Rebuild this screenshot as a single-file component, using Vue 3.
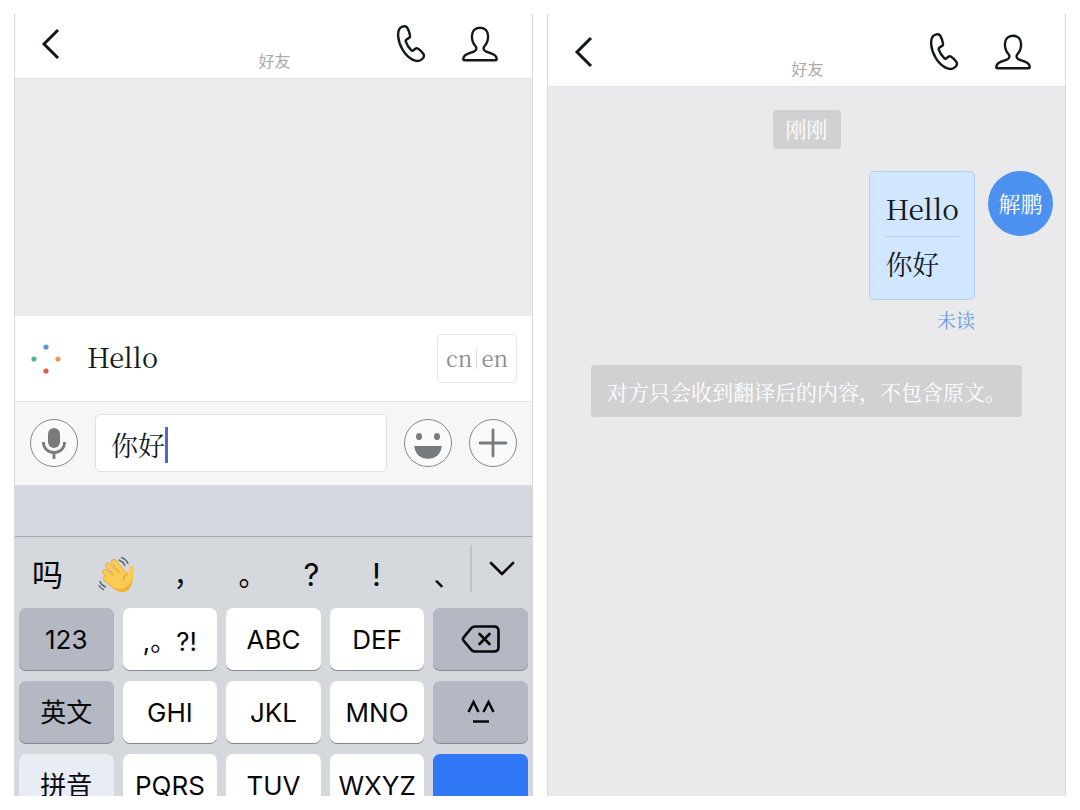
<script setup>
import { ref } from 'vue'

const draft = ref('你好')
const candidates = [
  { text: '吗' },
  { wave: true, text: '挥手' },
  { text: '，', mark: true },
  { text: '。', mark: true },
  { text: '?', latin: true },
  { text: '!', latin: true },
  { text: '、', mark: true },
]
const keys = [
  { text: '123', tone: 'dark' },
  { text: ',。?!', tone: 'light' },
  { text: 'ABC', tone: 'light' },
  { text: 'DEF', tone: 'light' },
  { icon: 'delete', tone: 'dark', label: '删除' },
  { text: '英文', tone: 'dark', cjk: true },
  { text: 'GHI', tone: 'light' },
  { text: 'JKL', tone: 'light' },
  { text: 'MNO', tone: 'light' },
  { icon: 'face', tone: 'dark', label: '颜文字' },
  { text: '拼音', tone: 'pale', cjk: true },
  { text: 'PQRS', tone: 'light' },
  { text: 'TUV', tone: 'light' },
  { text: 'WXYZ', tone: 'light' },
  { tone: 'blue', label: '确认' },
]
const screens = ['compose', 'thread']
</script>

<template>
  <main class="page">
    <section v-for="screen in screens" :key="screen" class="phone" :class="screen">
      <header class="bar">
        <button class="plain back" aria-label="返回">
          <svg width="20" height="32" viewBox="0 0 20 32"><path d="M17 2 3 16l14 14" fill="none" stroke="#15171a" stroke-width="3" /></svg>
        </button>
        <h1 class="title">好友</h1>
        <div class="actions">
          <button class="plain" aria-label="通话">
            <svg width="30" height="40" viewBox="0 0 30 40"><path d="M6.500 2.600C3.300 3.600 1.800 7.500 2.200 12.500c.8 9.500 6.800 19.300 14.300 23.100 3.300 1.600 7.300 1.800 9.700-.6 2.100-2 2.400-3.200 1.200-5-1.400-2.200-3.200-4-5.200-5.300-1.200-.7-2-.6-2.900.1l-2.200 1.700c-.7.5-1.300.3-1.900-.3-2.700-2.700-4.400-5.300-5.400-8.500-.3-1 0-1.800.8-2.300l2.200-1.300c1-.6 1.500-1.400 1.200-2.700-.5-2.700-1.200-4.900-2.500-7.300-.9-1.600-2.900-2.100-5-1.500Z" fill="none" stroke="#15171a" stroke-width="2.400" stroke-linejoin="round" /></svg>
          </button>
          <button class="plain" aria-label="个人资料">
            <svg width="36" height="36" viewBox="0 0 36 36"><path d="M18 1.700c-5 0-8.100 3.300-8.100 8.600 0 4.200 1.200 7.300 3.500 9.700 1.700 1.800 1.200 4.200-.8 5.200-2.400 1.200-5.700 1.900-8.200 3.300-2.200 1.200-3.100 2.500-3.100 4.500 0 .9.400 1.300 1.400 1.300h30.600c1 0 1.400-.4 1.400-1.300 0-2-.9-3.300-3.100-4.500-2.500-1.400-5.800-2.100-8.200-3.300-2-1-2.500-3.400-.8-5.200 2.300-2.400 3.500-5.500 3.500-9.700 0-5.300-3.100-8.600-8.100-8.600Z" fill="none" stroke="#15171a" stroke-width="2.400" stroke-linejoin="round" /></svg>
          </button>
        </div>
      </header>

      <template v-if="screen === 'compose'">
        <div class="history"></div>
        <div class="translation">
          <svg class="dots" width="30" height="30" viewBox="0 0 30 30" aria-hidden="true">
            <circle cx="15" cy="3" r="2.600" fill="#5b92d8" /><circle cx="27" cy="15" r="2.600" fill="#e59b52" />
            <circle cx="15" cy="27" r="2.600" fill="#d55f50" /><circle cx="3" cy="15" r="2.600" fill="#54b684" />
          </svg>
          <span class="translated">Hello</span>
          <button class="lang"><span>cn</span><i></i><span>en</span></button>
        </div>
        <form class="composer" @submit.prevent>
          <button type="button" class="round" aria-label="语音">
            <svg width="30" height="34" viewBox="0 0 30 34"><rect x="9" y="2" width="12" height="20" rx="6" fill="#777b7d" /><path d="M4.500 16v1a10.500 9.500 0 0 0 21 0v-1M15 26v7" fill="none" stroke="#777b7d" stroke-width="2.800" /></svg>
          </button>
          <div class="field">
            <input v-model="draft" type="text" aria-label="消息内容" />
            <span class="caret"></span>
          </div>
          <button type="button" class="round" aria-label="表情">
            <svg width="30" height="34" viewBox="0 0 30 34"><ellipse cx="6" cy="10.500" rx="3" ry="3.500" fill="#777b7d" /><ellipse cx="24" cy="10.500" rx="3" ry="3.500" fill="#777b7d" /><path d="M1.300 20h27.400c-.5 8-6 12.800-13.700 12.800S1.800 28 1.300 20Z" fill="#777b7d" /></svg>
          </button>
          <button type="button" class="round" aria-label="更多">
            <svg width="30" height="30" viewBox="0 0 30 30"><path d="M15 2v26M2 15h26" stroke="#777b7d" stroke-width="2.800" stroke-linecap="round" /></svg>
          </button>
        </form>
        <div class="accessory"></div>
        <div class="keyboard">
          <div class="suggestions">
            <div class="candidates">
              <button v-for="c in candidates" :key="c.text" class="plain candidate" :class="{ mark: c.mark, latin: c.latin, wave: c.wave }" :aria-label="c.text">
                <svg v-if="c.wave" width="38" height="38" viewBox="0 0 38 38">
                  <g fill="none" stroke-linecap="round">
                    <g stroke="#dfa02f" stroke-width="5.600">
                      <path d="m16 6 11 13M10 9.500 23 22M7 16l13 11M8 22.500 18 31" />
                    </g>
                    <g stroke="#fccb52" stroke-width="4.400">
                      <path d="m16 6 11 13M10 9.500 23 22M7 16l13 11M8 22.500 18 31" />
                    </g>
                    <path d="M21 4q4 1.500 6 5.500M23.500 1.500Q28 3 30 7.500M2 25.500q1.500 4 5.500 5.500M1 29.500q1.500 3 4.500 4" stroke="#5d656e" stroke-width="1.400" />
                  </g>
                  <path d="m17 17 9-2 4 3c.6-2 .8-4.500 1.700-6.700 1-2.300 4.400-1.800 4.300.9-.1 3.300-.5 6-1 9.800C34.300 30 30.500 36 24.500 36c-4.500 0-8-2.500-12-7Z" fill="#fccb52" />
                  <path d="M30 18c-2.800 1-4.700 3.500-4.500 7" fill="none" stroke="#dda03a" stroke-width="1.200" />
                  <path d="M35.200 21C34.300 30 30.500 36 24.500 36c-3.500 0-6.500-1.500-9.500-4.500C23.500 35 32 32 35.200 21Z" fill="#f0b03a" />
                </svg>
                <template v-else>{{ c.text }}</template>
              </button>
            </div>
            <button class="plain expand" aria-label="展开候选">
              <svg width="28" height="18" viewBox="0 0 28 18"><path d="m3 3 11 11L25 3" fill="none" stroke="#080808" stroke-width="2.600" stroke-linecap="round" stroke-linejoin="round" /></svg>
            </button>
          </div>
          <div class="keys">
            <button v-for="(k, i) in keys" :key="i" class="key" :class="[k.tone, { cjk: k.cjk }]" :aria-label="k.label">
              <svg v-if="k.icon === 'delete'" width="40" height="30" viewBox="0 0 40 30"><path d="M14 2.500h19q4.500 0 4.500 4.500v16q0 4.500-4.500 4.500H14q-2 0-3.500-1.500L3 17.200q-2-2.200 0-4.400L10.500 4Q12 2.500 14 2.500Z" fill="none" stroke="#080808" stroke-width="2.600" /><path d="m18.500 10 10 10m0-10-10 10" stroke="#080808" stroke-width="2.600" stroke-linecap="round" /></svg>
              <svg v-else-if="k.icon === 'face'" width="30" height="26" viewBox="0 0 30 26"><path d="m2.500 13 5-10 5 10M17.500 13l5-10 5 10M7 22.500h16" fill="none" stroke="#080808" stroke-width="2.500" /></svg>
              <template v-else>{{ k.text }}</template>
            </button>
          </div>
        </div>
      </template>

      <div v-else class="conversation">
        <time class="stamp">刚刚</time>
        <article class="message">
          <div class="message-body">
            <div class="bubble">
              <p>Hello</p>
              <p class="original">你好</p>
            </div>
            <span class="status">未读</span>
          </div>
          <span class="avatar">解鹏</span>
        </article>
        <p class="notice">对方只会收到翻译后的内容，不包含原文。</p>
      </div>
    </section>
  </main>
</template>

<style>
body {
  margin: 0;
  background: #fff;
}
</style>

<style scoped>
* {
  box-sizing: border-box;
}
.page {
  display: grid;
  grid-template-columns: 1fr 1fr;
  gap: 14px;
  height: 100vh;
  padding: 14px;
  font-family: "Noto Serif CJK SC", "Liberation Serif", "Noto Sans CJK SC", serif;
  color: #15191d;
}
.phone {
  display: flex;
  flex-direction: column;
  min-width: 0;
  overflow: hidden;
  border: solid #d8d9dc;
  border-width: 0 1px;
  background: #ebebeb;
}
.thread {
  background: #eaeaec;
}
button {
  font: inherit;
  color: inherit;
  cursor: pointer;
}
svg {
  display: block;
  flex: none;
}
.plain {
  display: flex;
  padding: 0;
  border: 0;
  background: none;
}
.bar {
  display: grid;
  grid-template-columns: 1fr auto 1fr;
  align-items: center;
  flex: none;
  height: 65px;
  padding: 0 34px 4px 26px;
  border-bottom: 1px solid #e2e2e2;
  background: #fff;
}
.thread .bar {
  height: 73px;
  padding-top: 8px;
}
.title {
  align-self: end;
  margin: 0;
  padding: 0 0 2px 10px;
  font: 400 16px/24px "Noto Sans CJK SC", sans-serif;
  color: #aaa;
}
.actions {
  display: flex;
  justify-content: flex-end;
  align-items: center;
  gap: 36px;
}
.history {
  flex: none;
  height: 237px;
}
.translation {
  display: flex;
  align-items: center;
  flex: none;
  height: 85px;
  padding: 0 15px 0 16px;
  background: #fff;
}
.translated {
  margin-left: 26px;
  padding-bottom: 3px;
  font-size: 27px;
  line-height: 40px;
}
.lang {
  display: flex;
  align-items: center;
  justify-content: center;
  gap: 4px;
  width: 80px;
  height: 49px;
  margin-left: auto;
  padding: 0;
  border: 1px solid #e6e6e6;
  border-radius: 5px;
  background: #fff;
  font-size: 22px;
  line-height: 32px;
  color: #8b8d8f;
}
.lang span {
  padding-bottom: 2px;
}
.lang i {
  width: 1px;
  height: 20px;
  background: #ddd;
}
.composer {
  display: flex;
  align-items: center;
  flex: none;
  gap: 17px;
  height: 84px;
  padding: 0 15px 2px;
  border-top: 1px solid #e2e3e4;
  background: #f6f6f7;
}
.round {
  display: flex;
  align-items: center;
  justify-content: center;
  flex: none;
  width: 48px;
  height: 48px;
  padding: 0;
  border: 1px solid #858889;
  border-radius: 50%;
  background: #fafafa;
}
.field {
  position: relative;
  flex: 1;
  min-width: 0;
}
.field input {
  display: block;
  width: 100%;
  height: 58px;
  padding: 3px 15px 0;
  border: 1px solid #e0e1e2;
  border-radius: 5px;
  outline: 0;
  background: #fff;
  font: inherit;
  font-size: 27px;
  color: inherit;
}
.caret {
  position: absolute;
  top: 13px;
  left: 70px;
  width: 3px;
  height: 36px;
  background: #5367c8;
}
.accessory {
  flex: none;
  height: 51px;
  background: #d5d8de;
}
.keyboard {
  flex: none;
  border-top: 1px solid #a5a9ad;
  background: #d5d9de;
  font-family: Inter, "Noto Sans CJK SC", sans-serif;
  color: #080808;
}
.suggestions {
  display: flex;
  height: 71px;
}
.candidates {
  display: grid;
  grid-template-columns: repeat(7, minmax(0, 1fr));
  flex: 1;
}
.candidate {
  align-items: center;
  justify-content: center;
  font-family: "Noto Sans CJK SC", sans-serif;
  font-size: 31px;
}
.wave {
  padding: 4px 0 0 8px;
}
.mark {
  padding: 2px 0 0 20px;
  font-size: 28px;
}
.latin {
  padding: 4px 0 0 8px;
  font-family: Inter, sans-serif;
}
.expand {
  align-items: center;
  justify-content: center;
  width: 62px;
  height: 47px;
  margin-top: 8px;
  border-left: 2px solid #bfc2c6;
}
.keys {
  display: grid;
  grid-template-columns: repeat(5, 1fr);
  gap: 11px 9px;
  padding: 0 4px 11px;
}
.key {
  display: flex;
  align-items: center;
  justify-content: center;
  min-width: 0;
  height: 62px;
  padding: 0;
  border: 0;
  border-radius: 7px;
  box-shadow: 0 1px 0 #85888e;
  font-size: 26px;
}
.cjk {
  padding-bottom: 4px;
}
.dark {
  background: #b3b8c2;
}
.light {
  background: #fff;
}
.pale {
  background: #e8ecf4;
}
.blue {
  background: #3078f6;
}
.conversation {
  display: flex;
  flex-direction: column;
  align-items: center;
  padding: 23px 12px;
}
.stamp {
  padding: 3px 13px 5px;
  border-radius: 4px;
  background: #d1d1d3;
  font-size: 21px;
  line-height: 31px;
  color: #fff;
}
.message {
  display: flex;
  align-items: flex-start;
  align-self: flex-end;
  gap: 13px;
  margin-top: 22px;
}
.message-body {
  display: flex;
  flex-direction: column;
  align-items: flex-end;
}
.bubble {
  padding: 8px 15px;
  border: 1px solid #b4d3eb;
  border-radius: 5px;
  background: #d0e7ff;
  font-size: 28px;
  line-height: 56px;
}
.bubble p {
  margin: 0;
}
.bubble .original {
  border-top: 1px solid #b9d0e5;
  font-size: 27px;
  line-height: 54px;
}
.status {
  margin-top: 5px;
  font-size: 19px;
  line-height: 30px;
  color: #6798dc;
}
.avatar {
  display: flex;
  align-items: center;
  justify-content: center;
  width: 65px;
  height: 65px;
  padding-bottom: 2px;
  border-radius: 50%;
  background: #4c91ef;
  font-size: 22px;
  line-height: 32px;
  color: #fff;
}
.notice {
  margin: 30px 0 0;
  padding: 11px 16px;
  border-radius: 4px;
  background: #d1d1d3;
  font-size: 21px;
  line-height: 30px;
  color: #fff;
}
</style>
